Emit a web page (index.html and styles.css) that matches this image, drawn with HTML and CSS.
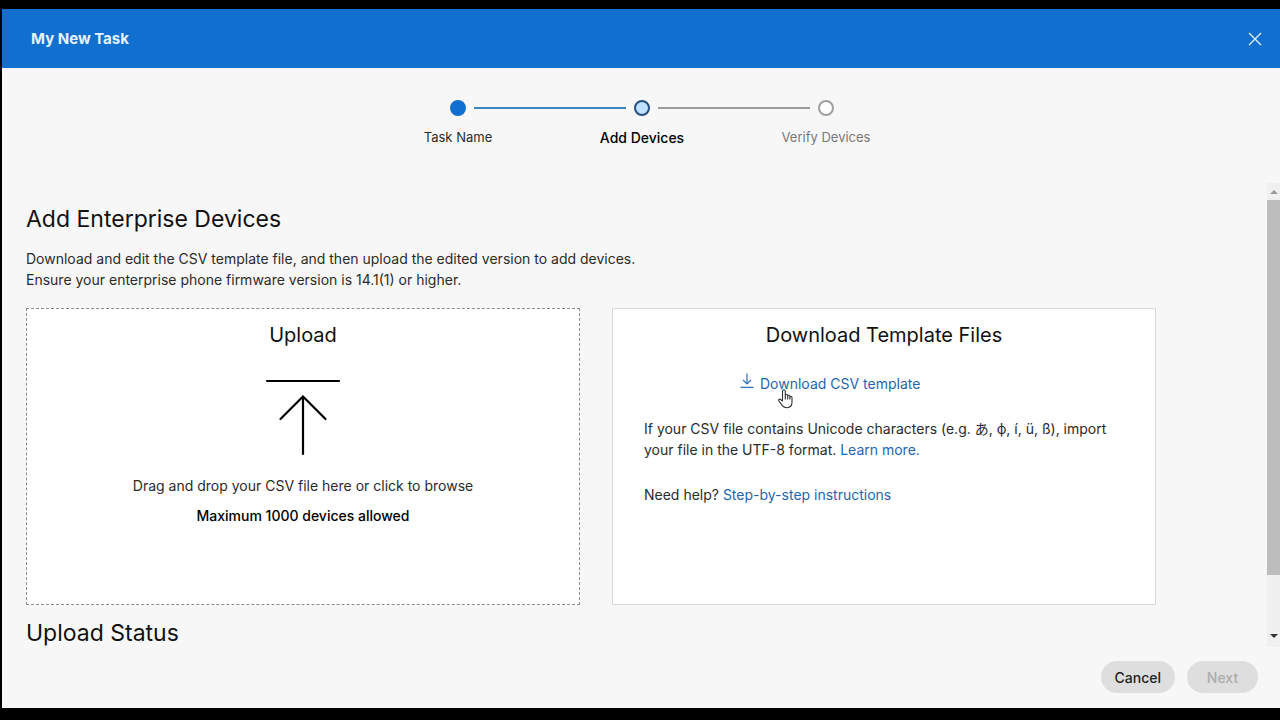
FILE: index.html
```
<!DOCTYPE html>
<html lang="en">
<head>
    <meta charset="UTF-8">
    <meta name="viewport" content="width=device-width, initial-scale=1.0">
    <title>My New Task</title>
    <link rel="stylesheet" href="styles.css">
</head>
<body>

    <div class="window">
        <header class="header">
            <h1 class="header-title">My New Task</h1>
            <button class="close" type="button" aria-label="Close">
                <svg width="14" height="14" viewBox="0 0 14 14" fill="none" stroke="currentColor" stroke-width="1.3">
                    <path d="M1 1l12 12M13 1L1 13"/>
                </svg>
            </button>
        </header>

        <ol class="steps">
            <li class="step done">
                <span class="dot"></span>
                <span class="step-label">Task Name</span>
            </li>
            <li class="step current" aria-current="step">
                <span class="dot"></span>
                <span class="step-label">Add Devices</span>
            </li>
            <li class="step">
                <span class="dot"></span>
                <span class="step-label">Verify Devices</span>
            </li>
        </ol>

        <div class="scroller">
            <main class="content">
                <h2>Add Enterprise Devices</h2>
                <p class="intro">
                    Download and edit the CSV template file, and then upload the edited version to add devices.<br>
                    Ensure your enterprise phone firmware version is 14.1(1) or higher.
                </p>

                <div class="cards">
                    <button class="card upload" type="button">
                        <span class="card-title">Upload</span>
                        <svg class="upload-icon" width="76" height="78" viewBox="0 0 76 78" fill="none" stroke="#000" stroke-width="2.2" stroke-linecap="round">
                            <path d="M2 3h72"/>
                            <path d="M38 76V19"/>
                            <path d="M15.500 41L38 18.500 60.500 41"/>
                        </svg>
                        <span class="upload-text">Drag and drop your CSV file here or click to browse</span>
                        <span class="upload-limit">Maximum 1000 devices allowed</span>
                    </button>

                    <section class="card templates">
                        <h3 class="card-title">Download Template Files</h3>
                        <div class="download">
                            <svg class="download-icon" width="14" height="16" viewBox="0 0 14 16" fill="none" stroke="#2f72b5" stroke-width="1.2">
                                <path d="M7 .5v10.500M3 7l4 4 4-4M.5 14.400h13"/>
                            </svg>
                            <a href="#">Download CSV template</a>
                            <svg class="pointer" width="15" height="20" viewBox="0 0 15 20" fill="#fff" stroke="#333" stroke-width="1.100" stroke-linejoin="round">
                                <path d="M4.500 12V2.200a1.400 1.400 0 0 1 2.800 0V8 6.600a1.200 1.200 0 0 1 2.400.2v1-.6a1.100 1.100 0 0 1 2.200.3v1-.3a1.100 1.100 0 0 1 2.100.4V13c0 3.400-1.800 5.700-5.200 5.700-2.700 0-4.300-1.200-5.600-3.600L.9 12c-.8-1.500.9-2.500 2-1.300z"/>
                                <path d="M7.300 8v2.500M9.700 8v2.500M11.900 8.500v2" fill="none"/>
                            </svg>
                        </div>
                        <p>If your CSV file contains Unicode characters (e.g. あ, ф, í, ü, ß), import your file in the UTF-8 format. <a href="#">Learn more.</a></p>
                        <p>Need help? <a href="#">Step-by-step instructions</a></p>
                    </section>
                </div>

                <h2>Upload Status</h2>
            </main>

            <div class="scrollbar" aria-hidden="true">
                <span class="arrow up"></span>
                <span class="thumb"></span>
                <span class="arrow down"></span>
            </div>
        </div>

        <footer class="footer">
            <button class="btn" type="button">Cancel</button>
            <button class="btn" type="button" disabled>Next</button>
        </footer>
    </div>

</body>
</html>
```
FILE: styles.css
```
* {
    box-sizing: border-box;
}
body {
    background: #000;
    color: #2b2b2b;
    font-family: Inter, "Noto Sans CJK JP", sans-serif;
    font-size: 14px;
    line-height: 21px;
    height: 100vh;
    margin: 0;
    padding: 9px 0 12px 2px;
}
h1, h2, h3, p, ol {
    margin: 0;
    padding: 0;
}
a {
    color: #1f66ad;
    text-decoration: none;
}
button {
    font: inherit;
    color: inherit;
    border: 0;
    padding: 0;
    cursor: pointer;
}
.window {
    background: #f7f7f7;
    height: 100%;
    display: flex;
    flex-direction: column;
}
.header {
    background: #1170cf;
    color: #e4f3ff;
    display: flex;
    align-items: center;
    justify-content: space-between;
    height: 59px;
    flex: none;
    padding: 0 18px 0 29px;
}
.header-title {
    font-size: 15px;
    font-weight: 700;
}
.close {
    background: none;
    display: flex;
}

.steps {
    list-style: none;
    display: flex;
    justify-content: center;
    flex: none;
    height: 115px;
    padding: 32px 0 0 2px;
}
.step {
    position: relative;
    width: 184px;
    display: flex;
    flex-direction: column;
    align-items: center;
    gap: 11px;
    color: #777;
    font-size: 13px;
}
.step + .step::before {
    content: "";
    position: absolute;
    top: 7px;
    right: 50%;
    width: 152px;
    height: 2px;
    margin-right: 16px;
    background: #9b9b9b;
}
.done + .step::before {
    background: #3f85bd;
}
.dot {
    width: 16px;
    height: 16px;
    border: 2px solid #a0a0a0;
    border-radius: 50%;
    background: #fff;
}
.done .dot {
    background: #1170cf;
    border-color: #1170cf;
}
.current .dot {
    background: #bfe0ff;
    border-color: #24507f;
}
.done {
    color: #2b2b2b;
}
.current {
    color: #000;
    font-size: 14px;
    font-weight: 500;
}

.scroller {
    flex: 1;
    min-height: 0;
    display: flex;
    overflow: hidden;
}
.content {
    flex: 1;
    padding: 22px 111px 0 24px;
}
h2 {
    color: #111;
    font-size: 23px;
    font-weight: 400;
    line-height: 28px;
}
.intro {
    margin: 15px 0 18px;
}
.cards {
    display: grid;
    grid-template-columns: 554fr 544fr;
    gap: 32px;
    margin-bottom: 14px;
}
.card {
    background: #fff;
    border: 1px solid #d8d8d8;
    min-height: 297px;
}
.card-title {
    color: #111;
    font-size: 20px;
    font-weight: 400;
    line-height: 26px;
    text-align: center;
}
.upload {
    border: 1px dashed #8c8c8c;
    display: flex;
    flex-direction: column;
    align-items: center;
    padding-top: 13px;
}
.upload-icon {
    margin: 30px 0 19px;
}
.upload-limit {
    color: #000;
    font-weight: 500;
    margin-top: 9px;
}
.templates {
    padding: 13px 31px 0;
}
.templates p {
    margin-top: 24px;
}
.download {
    position: relative;
    display: flex;
    gap: 6px;
    width: max-content;
    margin: 25px 0 0 96px;
}
.download-icon {
    flex: none;
}
.pointer {
    position: absolute;
    top: 16px;
    left: 38px;
}

.scrollbar {
    width: 13px;
    background: #f0f0f0;
    display: flex;
    flex-direction: column;
    align-items: center;
}
.thumb {
    background: #bdbdbd;
    width: 100%;
    height: 375px;
}
.arrow {
    border: 4px solid transparent;
}
.up {
    border-top: 0;
    border-bottom-color: #999;
    margin: 7px 0 6px;
}
.down {
    border-bottom: 0;
    border-top-color: #333;
    margin: auto 0 9px;
}

.footer {
    flex: none;
    display: flex;
    justify-content: flex-end;
    gap: 12px;
    padding: 14px 22px 15px;
}
.btn {
    background: #dedede;
    color: #222;
    font-weight: 500;
    height: 32px;
    min-width: 71px;
    padding: 0 14px;
    border-radius: 16px;
}
.btn:disabled {
    color: #adadad;
    cursor: default;
}
```
